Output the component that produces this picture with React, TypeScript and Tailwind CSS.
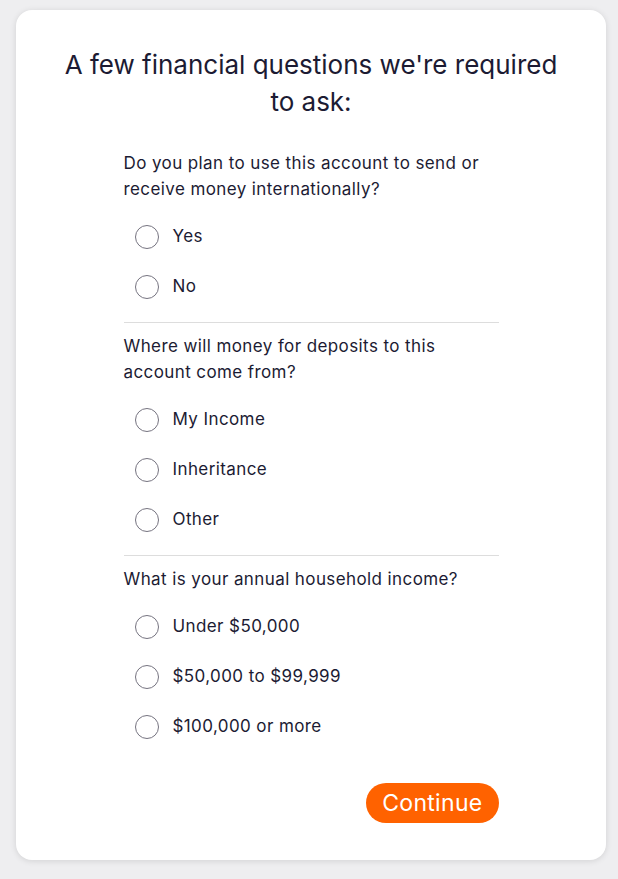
const questions = [
  {
    q: "Do you plan to use this account to send or receive money internationally?",
    options: ["Yes", "No"],
  },
  {
    q: "Where will money for deposits to this account come from?",
    options: ["My Income", "Inheritance", "Other"],
  },
  {
    q: "What is your annual household income?",
    options: ["Under $50,000", "$50,000 to $99,999", "$100,000 or more"],
  },
];

function Radio({ label }: { label: string }) {
  return (
    <label className="flex h-[50px] items-center">
      <span className="ml-[11px] h-6 w-6 rounded-full border border-[#75737f] bg-white" />
      <span className="ml-[14px] text-[17px] tracking-[0.4px] text-[#1c1b33]">{label}</span>
    </label>
  );
}

export default function App() {
  return (
    <div
      className="min-h-[879px] bg-[#eeeef0] pl-4 pr-3 pt-[10px] pb-[19px]"
      style={{ fontFamily: "Inter, 'Open Sans', sans-serif" }}
    >
      <div className="rounded-2xl bg-white pt-9 pb-[37px] shadow-[0_1px_6px_rgba(0,0,0,0.12)]">
        <h1 className="mx-auto w-[500px] text-center text-[26px] leading-[37px] text-[#1c1b33]">
          A few financial questions we're required to ask:
        </h1>

        <div className="mx-auto mt-[30px] w-[375px]">
          {questions.map((item, i) => (
            <div key={i}>
              {i > 0 && <div className="mt-[10px] mb-[10px] h-px bg-[#dddddd]" />}
              <p className="text-[17px] leading-[26px] tracking-[0.4px] text-[#1c1b33]">{item.q}</p>
              <div className="mt-[10px]">
                {item.options.map((o) => (
                  <Radio key={o} label={o} />
                ))}
              </div>
            </div>
          ))}

          <div className="mt-[31px] flex justify-end">
            <button className="h-10 rounded-full bg-[#ff6200] px-4 text-[23px] leading-none tracking-[0.3px] text-white">
              Continue
            </button>
          </div>
        </div>
      </div>
    </div>
  );
}
